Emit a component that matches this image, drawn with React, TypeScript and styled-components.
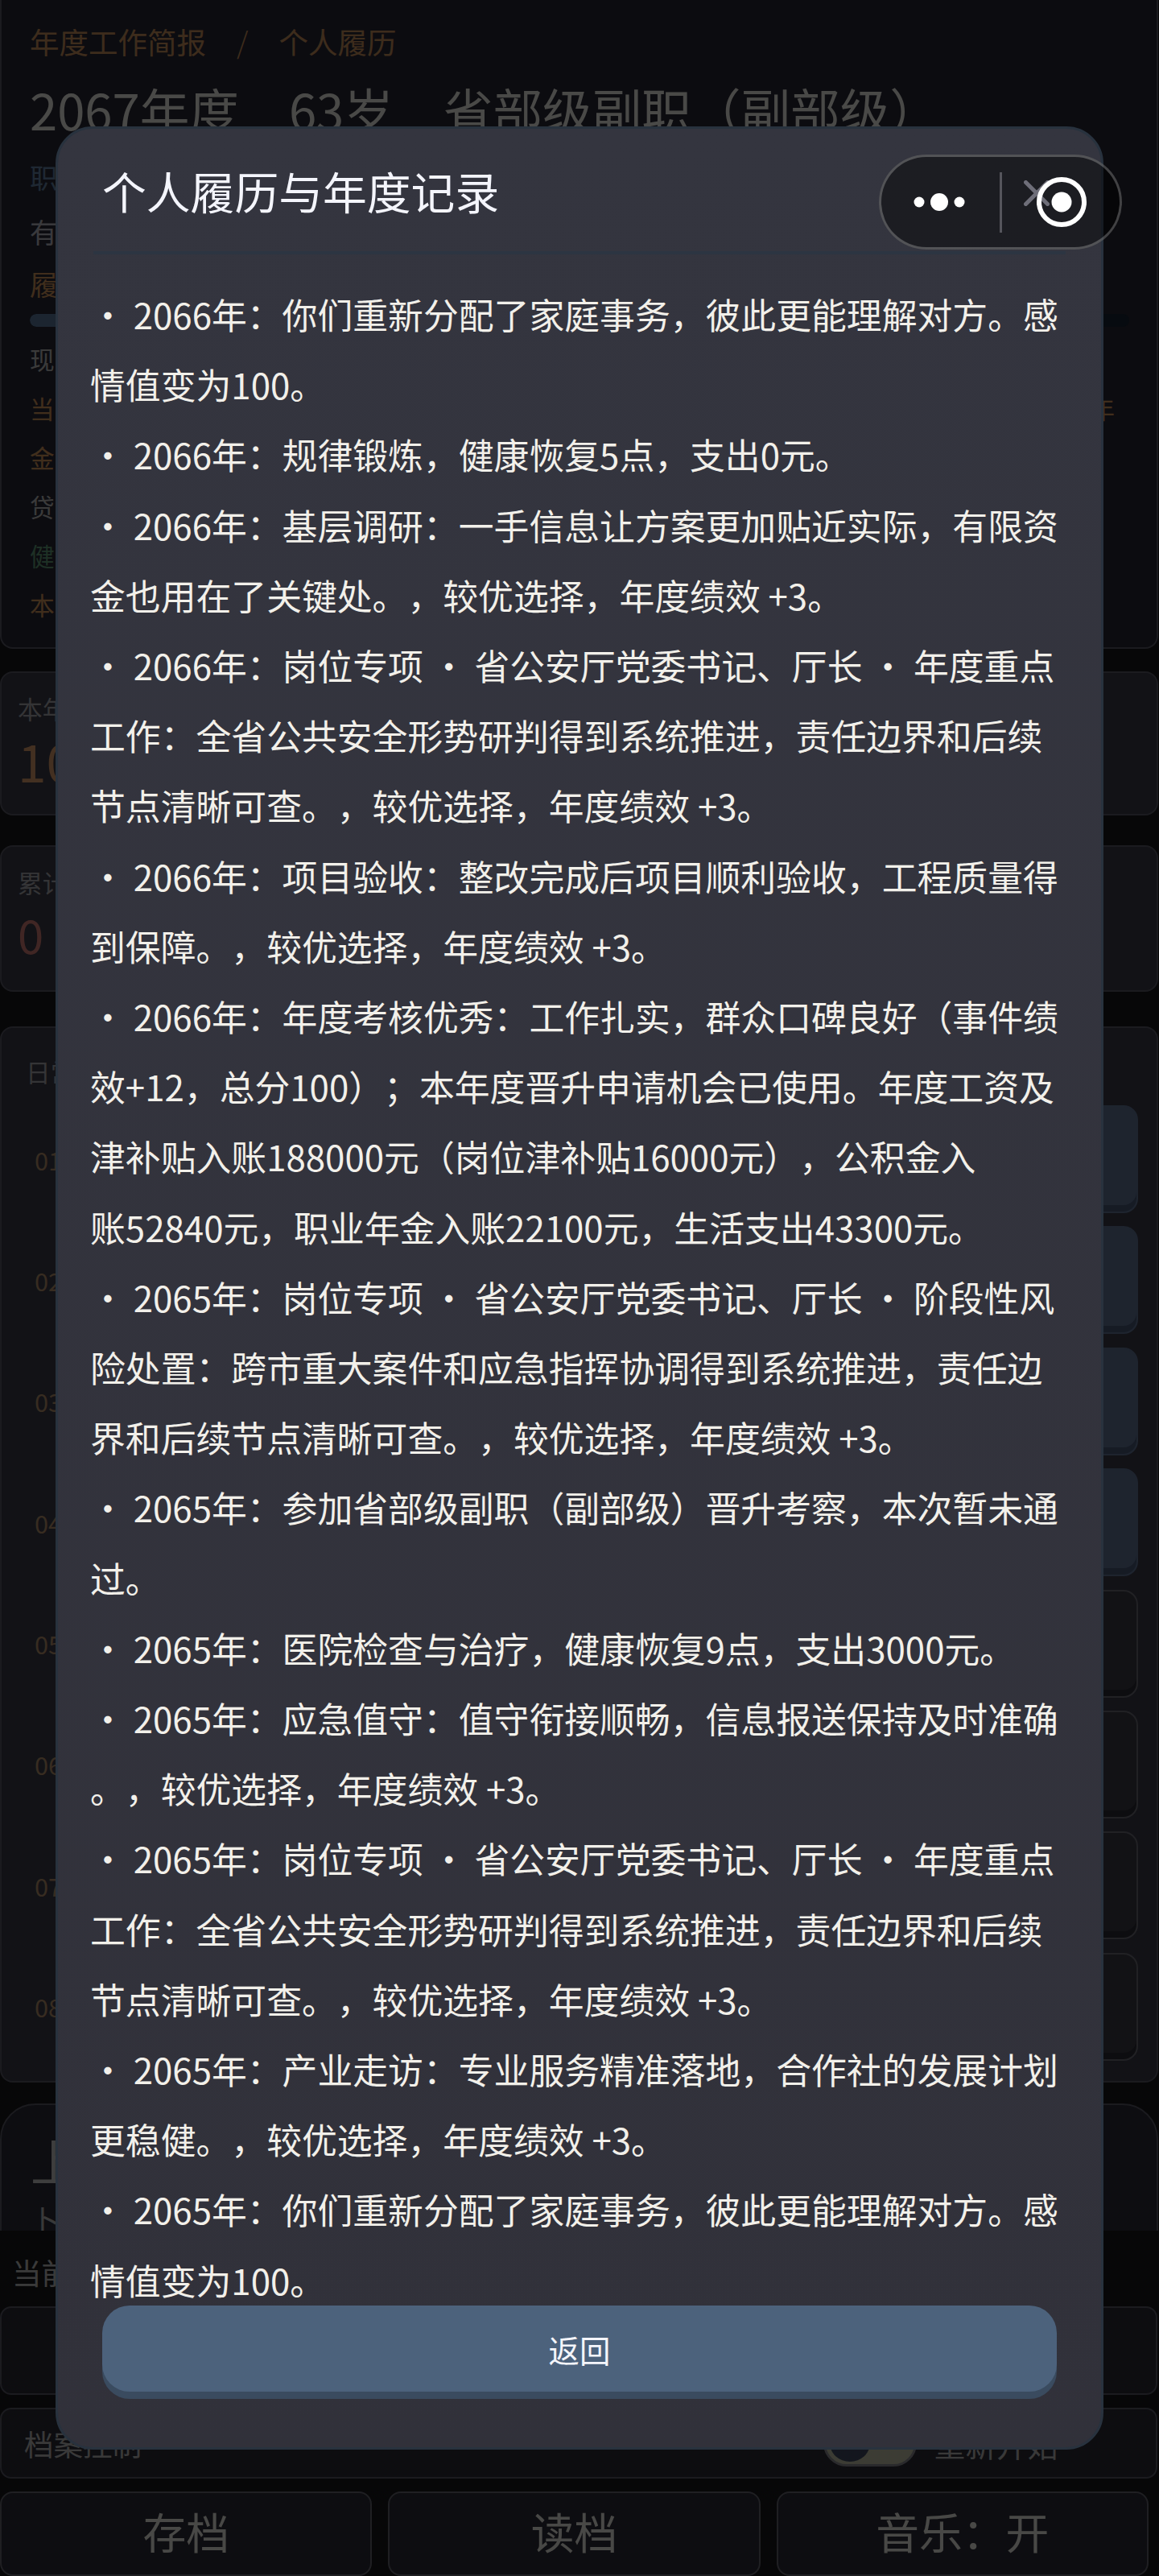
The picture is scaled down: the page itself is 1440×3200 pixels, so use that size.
import styled, { createGlobalStyle } from 'styled-components'

const GlobalStyle = createGlobalStyle`
  html, body {
    margin: 0;
    padding: 0;
    background: #050506;
    font-family: "Noto Sans CJK SC", "Noto Sans", sans-serif;
  }
  * { box-sizing: border-box; }
`

const Page = styled.div`
  position: relative;
  width: 1440px;
  height: 3200px;
  overflow: hidden;
  background: #18181c;
`

const Card = styled.section<{ $mt?: number }>`
  width: 1439px;
  margin-top: ${p => p.$mt ?? 0}px;
  background: #3c3c4a;
  border: 2px solid #5a5a68;
  border-radius: 16px;
`

const ProfileCard = styled(Card)`
  height: 806px;
  padding: 30px 34px 0 35px;
  border-top: none;
  border-radius: 0 0 16px 16px;
  background: #282836;
`

const Breadcrumb = styled.div`
  display: flex;
  align-items: center;
  height: 44px;
  font-size: 36.5px;
  line-height: 44px;
  color: #cc9560;
`

const CrumbSlash = styled.span`
  margin: 0 38px;
  font-weight: 300;
`

const Headline = styled.h1`
  display: flex;
  gap: 62px;
  height: 80px;
  margin: 22px 0 0;
  font-size: 61.6px;
  font-weight: 400;
  line-height: 80px;
  white-space: nowrap;
  color: #f6f4ee;
`

const StatRow = styled.div<{ $size?: number; $color?: string; $mt?: number }>`
  display: flex;
  justify-content: space-between;
  height: 61px;
  margin-top: ${p => p.$mt ?? 0}px;
  font-size: ${p => p.$size ?? 30.7}px;
  line-height: 61px;
  color: ${p => p.$color ?? '#c4c4c4'};
`

const StatTail = styled.span`
  margin-right: 18px;
`

const Progress = styled.div`
  height: 16px;
  margin: 6.5px 0 9.5px;
  border-radius: 8px;
  overflow: hidden;
  background: #182536;
`

const ProgressFill = styled.div`
  height: 100%;
  background: #5e7ca0;
  border-radius: 8px;
`

const MetricCard = styled(Card)<{ $h: number }>`
  height: ${p => p.$h}px;
  padding: 22px 0 0 20px;
`

const MetricLabel = styled.div`
  font-size: 30.7px;
  line-height: 44px;
  color: #b0b0b4;
`

const MetricValue = styled.div<{ $size: number; $color: string }>`
  font-size: ${p => p.$size}px;
  line-height: 84px;
  color: ${p => p.$color};
`

const ScheduleCard = styled(Card)`
  height: 1312px;
  padding: 32px 23px 0 30px;
`

const ScheduleTitle = styled.div`
  height: 64px;
  font-size: 30.7px;
  line-height: 44px;
  color: #b0b0b4;
`

const ScheduleList = styled.div`
  display: flex;
  flex-direction: column;
  gap: 16.4px;
`

const ScheduleRow = styled.div`
  display: flex;
  align-items: center;
  justify-content: space-between;
  height: 134px;
  padding-left: 11px;
  font-size: 30.7px;
  color: #b8946e;
`

const ActionTile = styled.div<{ $active: boolean }>`
  width: 480px;
  height: 134px;
  border-radius: 18px;
  border: 2px solid ${p => (p.$active ? '#64789c' : '#6e6e7a')};
  background: ${p => (p.$active ? '#64789c' : '#3e3e48')};
  box-shadow: inset 0 -8px 0 ${p => (p.$active ? '#4a5a7a' : '#2e2e36')};
`

const ReviewCard = styled(Card)`
  height: 300px;
  padding: 30px 0 0 36px;
  border-radius: 44px 44px 0 0;
  background: #2e2e3a;
`

const ReviewTitle = styled.div`
  font-size: 61px;
  line-height: 78px;
  color: #d0d0d0;
`

const ReviewSub = styled.div`
  margin-top: 8px;
  font-size: 36px;
  line-height: 50px;
  color: #c0c0c0;
`

const Dock = styled.div`
  position: absolute;
  left: 0;
  right: 0;
  bottom: 0;
  height: 429px;
  background: #18181c;
  border-bottom-right-radius: 22px;
`

const DockLabel = styled.div`
  height: 94px;
  padding: 26px 0 0 15px;
  font-size: 36.5px;
  line-height: 52px;
  color: #c4c4c4;
`

const DockCard = styled.div<{ $h: number }>`
  display: flex;
  align-items: center;
  justify-content: space-between;
  width: 1438px;
  height: ${p => p.$h}px;
  margin-bottom: 16px;
  padding: 0 121px 0 28px;
  background: #2c2c38;
  border: 2px solid #5a5a68;
  border-radius: 14px;
`

const ArchiveTitle = styled.span`
  font-size: 36.5px;
  color: #c0c0c0;
`

const ArchiveActions = styled.div`
  display: flex;
  align-items: center;
  gap: 22px;
  font-size: 38.6px;
  color: #c0c0c0;
`

const Toggle = styled.div`
  display: flex;
  align-items: center;
  width: 116px;
  height: 58px;
  padding: 0 5px;
  border-radius: 29px;
  background: #c8caaf;
  border: 3px solid #8e8e94;
`

const ToggleKnob = styled.div`
  width: 50px;
  height: 46px;
  border-radius: 50%;
  background: #404c66;
`

const BottomBar = styled.div`
  display: grid;
  grid-template-columns: repeat(3, 1fr);
  gap: 20px;
  width: 1427px;
  height: 105px;
`

const BottomButton = styled.div`
  display: flex;
  align-items: center;
  justify-content: center;
  padding-bottom: 8px;
  font-size: 53.76px;
  color: #f2f0ea;
  background: #2e2e3a;
  border: 2px solid #686874;
  border-radius: 16px;
`

const Backdrop = styled.div`
  position: absolute;
  inset: 0;
  display: flex;
  align-items: center;
  justify-content: center;
  background: rgba(0, 0, 0, 0.7);
`

const Modal = styled.div`
  position: relative;
  display: flex;
  flex-direction: column;
  width: 1302px;
  height: 2886px;
  padding: 0 40px 69px;
  background: linear-gradient(#34353f, #31313a);
  border: 3px solid #28323e;
  border-radius: 46px;
`

const ModalHeader = styled.div`
  flex: none;
  height: 156px;
  margin: 0 4px;
  padding: 40px 0 0 11px;
  border-bottom: 4px solid #2c3542;
`

const ModalTitle = styled.h2`
  margin: 0;
  font-size: 54.8px;
  font-weight: 400;
  line-height: 72px;
  color: #f4f5fc;
`

const CloseButton = styled.button`
  position: absolute;
  left: 1196px;
  top: 60px;
  display: flex;
  width: 40px;
  height: 40px;
  padding: 4px;
  border: none;
  background: none;
  color: #c9c9dc;
`

const RecordList = styled.div`
  flex: 1;
  min-height: 0;
  margin-top: 31px;
  overflow: hidden;
  font-size: 43.84px;
  line-height: 87.2px;
  white-space: pre-line;
  word-break: break-all;
  text-spacing-trim: space-all;
  color: #f2f0ea;
`

const BackButton = styled.button`
  flex: none;
  height: 107px;
  margin: 0 15px;
  border: none;
  border-radius: 34px;
  background: #4c627c;
  box-shadow: 0 9px 0 #3a4b5f;
  font-family: inherit;
  font-size: 38.4px;
  color: #f4f5fa;
`

const Capsule = styled.div`
  position: absolute;
  top: 192px;
  left: 1092px;
  display: flex;
  align-items: center;
  width: 302px;
  height: 118px;
  background: rgba(0, 0, 0, 0.45);
  box-shadow: inset 0 0 0 3px rgba(255, 255, 255, 0.24);
  border-radius: 59px;
`

const CapsuleCell = styled.div`
  flex: 1;
  display: flex;
  align-items: center;
  justify-content: center;
`

const CapsuleDivider = styled.div`
  flex: none;
  width: 3px;
  height: 75px;
  background: #55555c;
`

const records = [
  '2066年：你们重新分配了家庭事务，彼此更能理解对方。感情值变为100。',
  '2066年：规律锻炼，健康恢复5点，支出0元。',
  '2066年：基层调研：一手信息让方案更加贴近实际，有限资金也用在了关键处。，较优选择，年度绩效 +3。',
  '2066年：岗位专项 ・ 省公安厅党委书记、厅长 ・ 年度重点工作：全省公共安全形势研判得到系统推进，责任边界和后续节点清晰可查。，较优选择，年度绩效 +3。',
  '2066年：项目验收：整改完成后项目顺利验收，工程质量得到保障。，较优选择，年度绩效 +3。',
  '2066年：年度考核优秀：工作扎实，群众口碑良好（事件绩效+12，总分100）；本年度晋升申请机会已使用。年度工资及津补贴入账188000元（岗位津补贴16000元），公积金入\n账52840元，职业年金入账22100元，生活支出43300元。',
  '2065年：岗位专项 ・ 省公安厅党委书记、厅长 ・ 阶段性风险处置：跨市重大案件和应急指挥协调得到系统推进，责任边界和后续节点清晰可查。，较优选择，年度绩效 +3。',
  '2065年：参加省部级副职（副部级）晋升考察，本次暂未通过。',
  '2065年：医院检查与治疗，健康恢复9点，支出3000元。',
  '2065年：应急值守：值守衔接顺畅，信息报送保持及时准确\n。，较优选择，年度绩效 +3。',
  '2065年：岗位专项 ・ 省公安厅党委书记、厅长 ・ 年度重点工作：全省公共安全形势研判得到系统推进，责任边界和后续节点清晰可查。，较优选择，年度绩效 +3。',
  '2065年：产业走访：专业服务精准落地，合作社的发展计划更稳健。，较优选择，年度绩效 +3。',
  '2065年：你们重新分配了家庭事务，彼此更能理解对方。感情值变为100。',
]

const scheduleRows = ['01', '02', '03', '04', '05', '06', '07', '08']

export default function App() {
  return (
    <>
      <GlobalStyle />
      <Page>
        <ProfileCard>
          <Breadcrumb>
            年度工作简报<CrumbSlash>/</CrumbSlash>个人履历
          </Breadcrumb>
          <Headline>
            <span>2067年度</span>
            <span>63岁</span>
            <span>省部级副职（副部级）</span>
          </Headline>
          <StatRow $size={34.5} $color="#6a88aa" $mt={13}>职</StatRow>
          <StatRow $size={34.5} $color="#c0c0c8" $mt={7}>有</StatRow>
          <StatRow $size={34.5} $color="#d89a60" $mt={4}>履</StatRow>
          <Progress>
            <ProgressFill style={{ width: '60%' }} />
          </Progress>
          <StatRow>现</StatRow>
          <StatRow $color="#d89a60">
            <span>当</span>
            <StatTail>年</StatTail>
          </StatRow>
          <StatRow $color="#d89a60">金</StatRow>
          <StatRow>贷</StatRow>
          <StatRow $color="#64a07c">健</StatRow>
          <StatRow $color="#d89a60">本</StatRow>
        </ProfileCard>

        <MetricCard $mt={28} $h={179}>
          <MetricLabel>本年</MetricLabel>
          <MetricValue $size={64} $color="#e0a070">10</MetricValue>
        </MetricCard>
        <MetricCard $mt={37} $h={182}>
          <MetricLabel>累计</MetricLabel>
          <MetricValue $size={58} $color="#d8807a">0</MetricValue>
        </MetricCard>

        <ScheduleCard $mt={43}>
          <ScheduleTitle>日常</ScheduleTitle>
          <ScheduleList>
            {scheduleRows.map((num, i) => (
              <ScheduleRow key={num}>
                <span>{num}</span>
                <ActionTile $active={i < 4} />
              </ScheduleRow>
            ))}
          </ScheduleList>
        </ScheduleCard>

        <ReviewCard $mt={26}>
          <ReviewTitle>上</ReviewTitle>
          <ReviewSub>卜</ReviewSub>
        </ReviewCard>

        <Dock>
          <DockLabel>当前</DockLabel>
          <DockCard $h={110} />
          <DockCard $h={88}>
            <ArchiveTitle>档案控制</ArchiveTitle>
            <ArchiveActions>
              <Toggle>
                <ToggleKnob />
              </Toggle>
              <span>重新开始</span>
            </ArchiveActions>
          </DockCard>
          <BottomBar>
            <BottomButton>存档</BottomButton>
            <BottomButton>读档</BottomButton>
            <BottomButton>音乐：开</BottomButton>
          </BottomBar>
        </Dock>

        <Backdrop>
          <Modal>
            <ModalHeader>
              <ModalTitle>个人履历与年度记录</ModalTitle>
            </ModalHeader>
            <CloseButton>
              <svg viewBox="0 0 32 32" width="32" height="32" fill="none" stroke="currentColor" strokeWidth="5" strokeLinecap="round">
                <path d="M2.5 2.5l27 27M29.5 2.5l-27 27" />
              </svg>
            </CloseButton>
            <RecordList>
              {records.map((text, i) => (
                <div key={i}>・ {text}</div>
              ))}
            </RecordList>
            <BackButton>返回</BackButton>
          </Modal>
        </Backdrop>

        <Capsule>
          <CapsuleCell>
            <svg viewBox="0 0 64 24" width="64" height="24" fill="#fff">
              <circle cx="7" cy="12" r="6.5" />
              <circle cx="32" cy="12" r="11" />
              <circle cx="57" cy="12" r="6.5" />
            </svg>
          </CapsuleCell>
          <CapsuleDivider />
          <CapsuleCell>
            <svg viewBox="0 0 64 64" width="64" height="64" fill="none">
              <circle cx="32" cy="32" r="28" stroke="#fff" strokeWidth="6" />
              <circle cx="32" cy="32" r="12.5" fill="#fff" />
            </svg>
          </CapsuleCell>
        </Capsule>
      </Page>
    </>
  )
}
